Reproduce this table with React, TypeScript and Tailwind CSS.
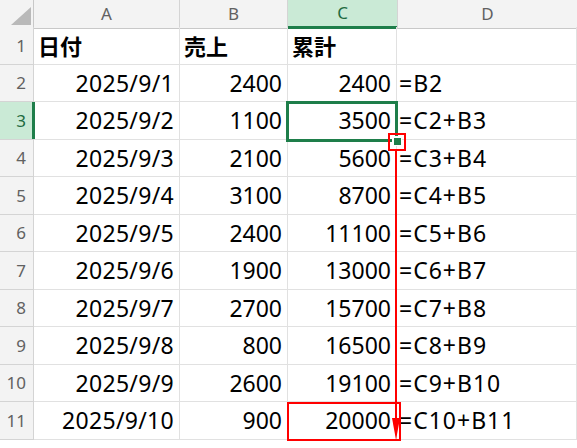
const rows: [string, string, string, string][] = [
  ["2025/9/1", "2400", "2400", "=B2"],
  ["2025/9/2", "1100", "3500", "=C2+B3"],
  ["2025/9/3", "2100", "5600", "=C3+B4"],
  ["2025/9/4", "3100", "8700", "=C4+B5"],
  ["2025/9/5", "2400", "11100", "=C5+B6"],
  ["2025/9/6", "1900", "13000", "=C6+B7"],
  ["2025/9/7", "2700", "15700", "=C7+B8"],
  ["2025/9/8", "800", "16500", "=C8+B9"],
  ["2025/9/9", "2600", "19100", "=C9+B10"],
  ["2025/9/10", "900", "20000", "=C10+B11"],
]

const heights = ["h-[38px]", "h-[37px]"]
const cjk = "font-['Noto_Sans_CJK_JP',sans-serif]"
const num = "font-['Noto_Sans','Noto_Sans_CJK_JP',sans-serif]"

function RowHead({ n, active }: { n: number; active?: boolean }) {
  return (
    <div
      className={`relative flex items-center justify-end pr-[7px] border-r border-b border-[#d4d4d4] text-[17px] ${num} ${
        active ? "bg-[#caead6] text-[#1e6b41]" : "bg-[#f3f3f3] text-[#616161]"
      }`}
    >
      {n}
      {active && <div className="absolute right-[-2px] top-0 bottom-0 w-[3px] bg-[#1e7e4a]" />}
    </div>
  )
}

export default function App() {
  return (
    <div className="relative w-[577px] h-[448px] overflow-hidden bg-white text-black">
      {/* column headers */}
      <div className="grid grid-cols-[34px_146px_108px_109px_180px] h-[27px]">
        <div className="relative bg-[#f3f3f3] border-r border-b border-[#c8c8c8]">
          <div className="absolute right-[2px] bottom-[3px] w-0 h-0 border-l-[20px] border-l-transparent border-b-[18px] border-b-[#b9b9b9]" />
        </div>
        {["A", "B"].map((c) => (
          <div
            key={c}
            className={`flex items-center justify-center bg-[#f3f3f3] border-r border-b border-r-[#d4d4d4] border-b-[#c8c8c8] text-[17px] text-[#616161] ${num}`}
          >
            {c}
          </div>
        ))}
        <div className={`flex items-center justify-center bg-[#caead6] border-b-[3px] border-[#1e7e4a] text-[17px] text-[#1e6b41] ${num}`}>
          C
        </div>
        <div className={`flex items-center justify-center bg-[#f3f3f3] border-l border-b border-l-[#d4d4d4] border-b-[#c8c8c8] text-[17px] text-[#616161] ${num}`}>
          D
        </div>
      </div>

      {/* row 1 */}
      <div className={`grid grid-cols-[34px_146px_108px_109px_180px] ${heights[0]}`}>
        <RowHead n={1} />
        {["日付", "売上", "累計", ""].map((t, i) => (
          <div key={i} className={`flex items-center pl-[4px] border-r border-b border-[#e1e1e1] text-[22px] font-bold ${cjk}`}>
            {t}
          </div>
        ))}
      </div>

      {rows.map((r, i) => (
        <div key={i} className={`grid grid-cols-[34px_146px_108px_109px_180px] ${heights[(i + 1) % 2]}`}>
          <RowHead n={i + 2} active={i === 1} />
          <div className={`flex items-center justify-end pr-[5px] border-r border-b border-[#e1e1e1] text-[23px] tracking-[0.3px] ${num}`}>{r[0]}</div>
          <div className={`flex items-center justify-end pr-[5px] border-r border-b border-[#e1e1e1] text-[23px] ${num}`}>{r[1]}</div>
          <div className={`flex items-center justify-end pr-[5px] border-r border-b border-[#e1e1e1] text-[23px] ${num}`}>{r[2]}</div>
          <div className={`flex items-center pl-[2px] border-r border-b border-[#e1e1e1] text-[23px] tracking-[1px] ${num}`}>{r[3]}</div>
        </div>
      ))}

      {/* selection C3 */}
      <div className="absolute left-[286px] top-[101px] w-[112px] h-[41px] border-[3px] border-[#1e7e4a]" />
      <div className="absolute left-[392px] top-[136px] w-[10px] h-[10px] bg-white" />
      <div className="absolute left-[394px] top-[138px] w-[7px] h-[7px] bg-[#1e7e4a]" />
      <div className="absolute left-[388px] top-[133px] w-[18px] h-[18px] border-2 border-[#ff0000]" />

      {/* arrow */}
      <div className="absolute left-[395px] top-[151px] w-[2px] h-[270px] bg-[#ff0000]" />
      <div className="absolute left-[392px] top-[418px] w-0 h-0 border-l-[4px] border-r-[4px] border-l-transparent border-r-transparent border-t-[22px] border-t-[#ff0000]" />

      {/* C11 box */}
      <div className="absolute left-[287px] top-[402px] w-[114px] h-[39px] border-2 border-[#ff0000]" />
    </div>
  )
}
